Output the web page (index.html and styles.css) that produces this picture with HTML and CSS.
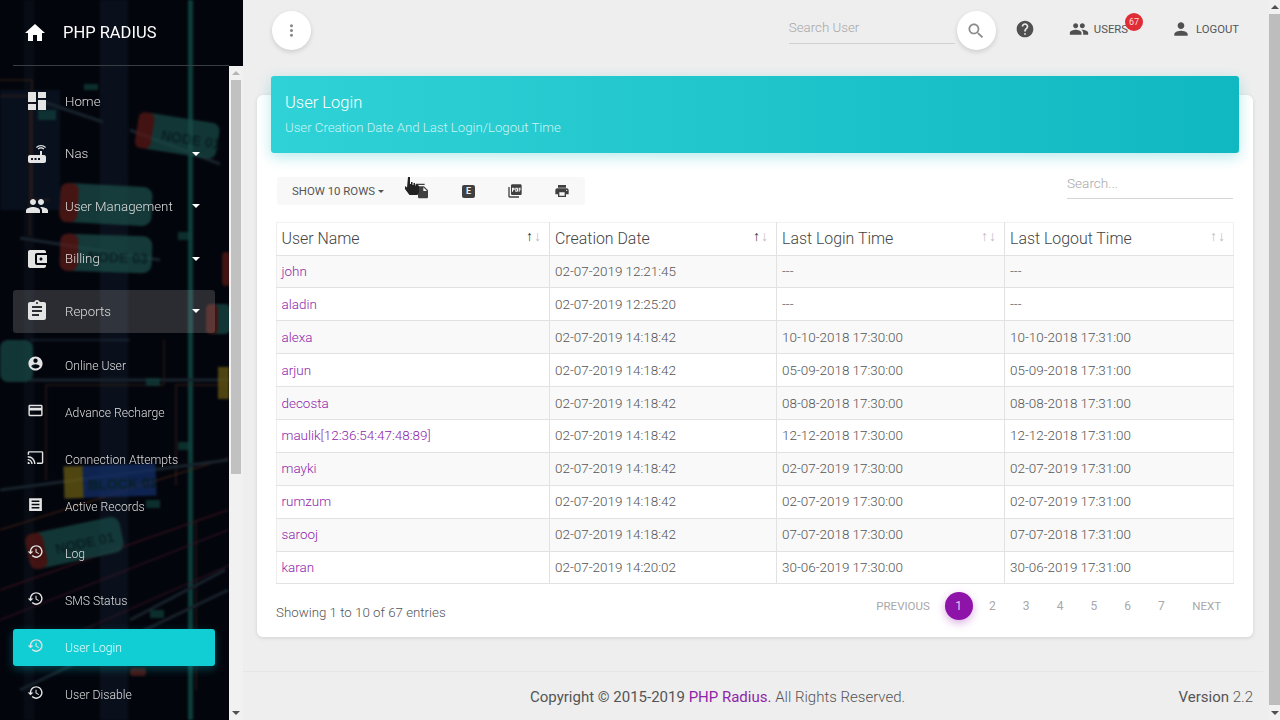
FILE: index.html
```html
<!DOCTYPE html>
<html lang="en">
<head>
    <meta charset="UTF-8">
    <meta name="viewport" content="width=device-width, initial-scale=1.0">
    <title>PHP Radius - User Login</title>
    <link rel="stylesheet" href="styles.css">
</head>
<body>
    <!-- Material icons -->
    <svg class="icon-defs" xmlns="http://www.w3.org/2000/svg">
        <symbol id="i-home" viewBox="0 0 24 24"><path d="M10 20v-6h4v6h5v-8h3L12 3 2 12h3v8z"/></symbol>
        <symbol id="i-dashboard" viewBox="0 0 24 24"><path d="M3 13h8V3H3v10zm0 8h8v-6H3v6zm10 0h8V11h-8v10zm0-18v6h8V3h-8z"/></symbol>
        <symbol id="i-router" viewBox="0 0 24 24"><path d="M20.2 5.9l.8-.8C19.6 3.7 17.8 3 16 3s-3.6.7-5 2.1l.8.8C13 4.8 14.5 4.2 16 4.2s3 .6 4.2 1.7zm-.9.8c-.9-.9-2.1-1.4-3.3-1.4s-2.4.5-3.3 1.4l.8.8c.7-.7 1.6-1 2.5-1 .9 0 1.8.3 2.5 1l.8-.8zM19 13h-2V9h-2v4H5c-1.1 0-2 .9-2 2v4c0 1.1.9 2 2 2h14c1.1 0 2-.9 2-2v-4c0-1.1-.9-2-2-2zM8 18H6v-2h2v2zm3.5 0h-2v-2h2v2zm3.5 0h-2v-2h2v2z"/></symbol>
        <symbol id="i-people" viewBox="0 0 24 24"><path d="M16 11c1.66 0 2.99-1.34 2.99-3S17.66 5 16 5c-1.66 0-3 1.34-3 3s1.34 3 3 3zm-8 0c1.66 0 2.99-1.34 2.99-3S9.66 5 8 5C6.34 5 5 6.34 5 8s1.34 3 3 3zm0 2c-2.33 0-7 1.17-7 3.5V19h14v-2.5c0-2.33-4.67-3.5-7-3.5zm8 0c-.29 0-.62.02-.97.05 1.16.84 1.97 1.97 1.97 3.45V19h6v-2.5c0-2.33-4.67-3.5-7-3.5z"/></symbol>
        <symbol id="i-wallet" viewBox="0 0 24 24"><path d="M21 18v1c0 1.1-.9 2-2 2H5c-1.11 0-2-.9-2-2V5c0-1.1.89-2 2-2h14c1.1 0 2 .9 2 2v1h-9c-1.11 0-2 .9-2 2v8c0 1.1.89 2 2 2h9zm-9-2h10V8H12v8zm4-2.5c-.83 0-1.5-.67-1.5-1.5s.67-1.5 1.5-1.5 1.5.67 1.5 1.5-.67 1.5-1.5 1.5z"/></symbol>
        <symbol id="i-assignment" viewBox="0 0 24 24"><path d="M19 3h-4.18C14.4 1.84 13.3 1 12 1c-1.3 0-2.4.84-2.82 2H5c-1.1 0-2 .9-2 2v14c0 1.1.9 2 2 2h14c1.1 0 2-.9 2-2V5c0-1.1-.9-2-2-2zm-7 0c.55 0 1 .45 1 1s-.45 1-1 1-1-.45-1-1 .45-1 1-1zm2 14H7v-2h7v2zm3-4H7v-2h10v2zm0-4H7V7h10v2z"/></symbol>
        <symbol id="i-account" viewBox="0 0 24 24"><path d="M12 2C6.48 2 2 6.48 2 12s4.48 10 10 10 10-4.48 10-10S17.52 2 12 2zm0 3c1.66 0 3 1.34 3 3s-1.34 3-3 3-3-1.34-3-3 1.34-3 3-3zm0 14.2c-2.5 0-4.71-1.28-6-3.22.03-1.99 4-3.08 6-3.08 1.99 0 5.97 1.09 6 3.08-1.29 1.94-3.5 3.22-6 3.22z"/></symbol>
        <symbol id="i-card" viewBox="0 0 24 24"><path d="M20 4H4c-1.11 0-1.99.89-1.99 2L2 18c0 1.11.89 2 2 2h16c1.11 0 2-.89 2-2V6c0-1.11-.89-2-2-2zm0 14H4v-6h16v6zm0-10H4V6h16v2z"/></symbol>
        <symbol id="i-cast" viewBox="0 0 24 24"><path d="M21 3H3c-1.1 0-2 .9-2 2v3h2V5h18v14h-7v2h7c1.1 0 2-.9 2-2V5c0-1.1-.9-2-2-2zM1 18v3h3c0-1.66-1.34-3-3-3zm0-4v2c2.76 0 5 2.24 5 5h2c0-3.87-3.13-7-7-7zm0-4v2c4.97 0 9 4.03 9 9h2c0-6.08-4.93-11-11-11z"/></symbol>
        <symbol id="i-records" viewBox="0 0 24 24"><path fill-rule="evenodd" d="M3 3h18v18H3zM6.500 6.500v2h11v-2zm0 4.500v2h11v-2zm0 4.500v2h11v-2z"/></symbol>
        <symbol id="i-history" viewBox="0 0 24 24"><path d="M13 3c-4.97 0-9 4.03-9 9H1l3.89 3.89.07.14L9 12H6c0-3.87 3.13-7 7-7s7 3.13 7 7-3.13 7-7 7c-1.93 0-3.68-.79-4.94-2.06l-1.42 1.42C8.27 19.99 10.51 21 13 21c4.97 0 9-4.03 9-9s-4.03-9-9-9zm-1 5v5l4.28 2.54.72-1.21-3.5-2.08V8H12z"/></symbol>
        <symbol id="i-search" viewBox="0 0 24 24"><path d="M15.5 14h-.79l-.28-.27C15.41 12.59 16 11.11 16 9.5 16 5.91 13.09 3 9.5 3S3 5.91 3 9.5 5.91 16 9.500 16c1.610 0 3.090-.59 4.230-1.570l.27.28v.79l5 4.990L20.490 19l-4.990-5zm-6 0C7.010 14 5 11.990 5 9.500S7.010 5 9.500 5 14 7.010 14 9.500 11.990 14 9.500 14z"/></symbol>
        <symbol id="i-help" viewBox="0 0 24 24"><path d="M12 2C6.48 2 2 6.48 2 12s4.48 10 10 10 10-4.48 10-10S17.52 2 12 2zm1 17h-2v-2h2v2zm2.07-7.75l-.9.92C13.45 12.9 13 13.5 13 15h-2v-.5c0-1.1.45-2.1 1.17-2.83l1.24-1.26c.37-.36.59-.86.59-1.41 0-1.1-.9-2-2-2s-2 .9-2 2H8c0-2.21 1.79-4 4-4s4 1.79 4 4c0 .88-.36 1.68-.93 2.25z"/></symbol>
        <symbol id="i-person" viewBox="0 0 24 24"><path d="M12 12c2.21 0 4-1.79 4-4s-1.79-4-4-4-4 1.790-4 4 1.790 4 4 4zm0 2c-2.670 0-8 1.340-8 4v2h16v-2c0-2.660-5.330-4-8-4z"/></symbol>
        <symbol id="i-more" viewBox="0 0 24 24"><path d="M12 8c1.100 0 2-.9 2-2s-.9-2-2-2-2 .9-2 2 .9 2 2 2zm0 2c-1.100 0-2 .9-2 2s.9 2 2 2 2-.9 2-2-.9-2-2-2zm0 6c-1.100 0-2 .9-2 2s.9 2 2 2 2-.9 2-2-.9-2-2-2z"/></symbol>
        <symbol id="i-copy" viewBox="0 0 24 24"><path d="M16 1H4c-1.100 0-2 .9-2 2v14h2V3h12V1zm-1 4l6 6v10c0 1.100-.9 2-2 2H7.990C6.890 23 6 22.100 6 21l.01-14c0-1.100.89-2 1.990-2h7zm-1 7h5.500L14 6.500V12z"/></symbol>
        <symbol id="i-pdf" viewBox="0 0 24 24"><path d="M20 2H8c-1.100 0-2 .9-2 2v12c0 1.100.9 2 2 2h12c1.100 0 2-.9 2-2V4c0-1.100-.9-2-2-2zm-8.500 7.500c0 .83-.67 1.500-1.500 1.500H9v2H7.500V7H10c.83 0 1.500.67 1.500 1.500v1zm5 2c0 .83-.67 1.500-1.500 1.500h-2.500V7H15c.83 0 1.500.67 1.500 1.500v3zm4-3H19v1h1.500V11H19v2h-1.500V7h3v1.500zM9 9.500h1v-1H9v1zM4 6H2v14c0 1.100.9 2 2 2h14v-2H4V6zm10 5.500h1v-3h-1v3z"/></symbol>
        <symbol id="i-print" viewBox="0 0 24 24"><path d="M19 8H5c-1.660 0-3 1.340-3 3v6h4v4h12v-4h4v-6c0-1.660-1.340-3-3-3zm-3 11H8v-5h8v5zm3-7c-.55 0-1-.45-1-1s.45-1 1-1 1 .45 1 1-.45 1-1 1zm-1-9H6v4h12V3z"/></symbol>
    </svg>

    <div class="app">
        <aside class="sidebar">
            <!-- background picture of the sidebar -->
            <svg class="side-bg" width="243" height="720" viewBox="0 0 243 720" xmlns="http://www.w3.org/2000/svg">
                <rect width="243" height="720" fill="#03050c"/>
                <rect x="0" y="90" width="60" height="120" fill="#0b1322" opacity=".8"/>
                <rect x="100" y="0" width="28" height="720" fill="#0e1420" opacity=".75"/>
                <rect x="24" y="0" width="10" height="720" fill="#0a101c" opacity=".6"/>
                <rect x="188" y="0" width="5" height="720" fill="#0c3d3b"/>
                <g fill="none" stroke-width="1">
                    <path d="M0 80h32v120h18" stroke="#3d2218"/>
                    <path d="M0 96h30v140" stroke="#3d2218"/>
                    <path d="M164 340v45h-118v95" stroke="#33201a"/>
                    <path d="M228 385h-52v100" stroke="#3a221a"/>
                    <path d="M0 530l228-72" stroke="#4a2516"/>
                    <path d="M0 590l228-80" stroke="#4a1526"/>
                    <path d="M0 620l228-90" stroke="#40142a"/>
                    <path d="M60 640l170-75" stroke="#3a1526"/>
                    <path d="M196 520v170" stroke="#33201a"/>
                    <path d="M30 340l100 0" stroke="#243444"/>
                </g>
                <g stroke="#18232c" stroke-width="3" fill="none">
                    <path d="M38 100l65 22"/>
                    <path d="M20 238l140 22"/>
                    <path d="M130 130l90 34"/>
                    <path d="M30 380h200"/>
                    <path d="M0 490l228-30"/>
                    <path d="M130 620l95-50"/>
                    <path d="M20 690l208-100"/>
                </g>
                <g opacity=".72">
                    <g transform="rotate(9 180 138)">
                        <rect x="136" y="118" width="82" height="36" rx="8" fill="#1a4b47"/>
                        <rect x="136" y="118" width="16" height="36" rx="6" fill="#5c1a16"/>
                        <text x="161" y="143" class="bg-label">NODE 01</text>
                    </g>
                    <g transform="rotate(3 106 205)">
                        <rect x="60" y="185" width="92" height="39" rx="9" fill="#1d4f4a"/>
                        <rect x="60" y="185" width="18" height="39" rx="7" fill="#601c18"/>
                    </g>
                    <g transform="rotate(2 106 254)">
                        <rect x="60" y="235" width="92" height="37" rx="9" fill="#1d4f4a"/>
                        <rect x="60" y="235" width="18" height="37" rx="7" fill="#601c18"/>
                        <text x="88" y="262" class="bg-label">NODE 03</text>
                    </g>
                    <rect x="222" y="252" width="8" height="34" rx="4" fill="#5c1a16"/>
                    <rect x="206" y="304" width="24" height="30" rx="5" fill="#1a4b47"/>
                    <rect x="206" y="304" width="12" height="30" rx="5" fill="#5c1a16"/>
                    <rect x="0" y="340" width="33" height="42" rx="8" fill="#1a4b47"/>
                    <rect x="218" y="367" width="11" height="32" fill="#6d5d14"/>
                    <g transform="rotate(-2 110 480)">
                        <rect x="64" y="465" width="92" height="32" fill="#14306a"/>
                        <rect x="64" y="465" width="19" height="32" fill="#6e5f14"/>
                        <text x="88" y="489" class="bg-label">BLOCK 01</text>
                    </g>
                    <g transform="rotate(-12 74 540)">
                        <rect x="26" y="525" width="96" height="36" rx="9" fill="#1a4b47"/>
                        <rect x="26" y="525" width="18" height="36" rx="7" fill="#5c1a16"/>
                        <text x="54" y="550" class="bg-label">NODE 01</text>
                    </g>
                    <rect x="130" y="668" width="16" height="8" rx="3" fill="#5c1a16"/>
                    <g fill="#12403d">
                        <rect x="38" y="110" width="18" height="10"/>
                        <rect x="84" y="84" width="14" height="6"/>
                        <rect x="178" y="232" width="14" height="8"/>
                        <rect x="146" y="378" width="14" height="8"/>
                        <rect x="178" y="442" width="14" height="8"/>
                        <rect x="146" y="500" width="14" height="8"/>
                        <rect x="150" y="610" width="14" height="8"/>
                    </g>
                </g>
            </svg>

            <a class="brand" href="#">
                <svg class="brand-icon"><use href="#i-home"/></svg>
                <span>PHP RADIUS</span>
            </a>

            <div class="side-body">
                <nav class="side-nav">
                    <a class="nav-item" href="#"><svg class="nav-icon"><use href="#i-dashboard"/></svg>Home</a>
                    <a class="nav-item" href="#"><svg class="nav-icon"><use href="#i-router"/></svg>Nas<i class="caret"></i></a>
                    <a class="nav-item" href="#"><svg class="nav-icon"><use href="#i-people"/></svg>User Management<i class="caret"></i></a>
                    <a class="nav-item" href="#"><svg class="nav-icon"><use href="#i-wallet"/></svg>Billing<i class="caret"></i></a>
                    <a class="nav-item open" href="#"><svg class="nav-icon"><use href="#i-assignment"/></svg>Reports<i class="caret"></i></a>

                    <div class="sub-nav">
                        <a class="sub-item" href="#"><svg class="sub-icon"><use href="#i-account"/></svg>Online User</a>
                        <a class="sub-item" href="#"><svg class="sub-icon"><use href="#i-card"/></svg>Advance Recharge</a>
                        <a class="sub-item" href="#"><svg class="sub-icon"><use href="#i-cast"/></svg>Connection Attempts</a>
                        <a class="sub-item" href="#"><svg class="sub-icon"><use href="#i-records"/></svg>Active Records</a>
                        <a class="sub-item" href="#"><svg class="sub-icon"><use href="#i-history"/></svg>Log</a>
                        <a class="sub-item" href="#"><svg class="sub-icon"><use href="#i-history"/></svg>SMS Status</a>
                        <a class="sub-item active" href="#"><svg class="sub-icon"><use href="#i-history"/></svg>User Login</a>
                        <a class="sub-item" href="#"><svg class="sub-icon"><use href="#i-history"/></svg>User Disable</a>
                    </div>
                </nav>
                <div class="side-scroll">
                    <i class="arrow-up"></i>
                    <div class="side-thumb"></div>
                    <i class="arrow-down"></i>
                </div>
            </div>
        </aside>

        <main class="main">
            <header class="topbar">
                <button class="round-btn menu-btn"><svg class="more-icon"><use href="#i-more"/></svg></button>
                <div class="top-search">Search User</div>
                <button class="round-btn search-btn"><svg class="search-icon"><use href="#i-search"/></svg></button>
                <a class="top-link help-link" href="#"><svg class="help-icon"><use href="#i-help"/></svg></a>
                <a class="top-link users-link" href="#">
                    <svg class="top-icon"><use href="#i-people"/></svg>USERS
                    <span class="badge">67</span>
                </a>
                <a class="top-link logout-link" href="#"><svg class="top-icon"><use href="#i-person"/></svg>LOGOUT</a>
            </header>

            <section class="card">
                <div class="card-header">
                    <h4>User Login</h4>
                    <p>User Creation Date And Last Login/Logout Time</p>
                </div>

                <div class="table-tools">
                    <div class="dt-buttons">
                        <span class="rows-btn">SHOW 10 ROWS<i class="rows-caret"></i></span>
                        <svg class="tool-icon copy-icon"><use href="#i-copy"/></svg>
                        <span class="excel-icon">E</span>
                        <svg class="tool-icon pdf-icon"><use href="#i-pdf"/></svg>
                        <svg class="tool-icon print-icon"><use href="#i-print"/></svg>
                    </div>
                    <div class="table-search">Search...</div>
                </div>

                <table class="data-table">
                    <thead>
                        <tr>
                            <th class="col-name">User Name<span class="sort"><b>↑</b>↓</span></th>
                            <th class="col-created">Creation Date<span class="sort"><b>↑</b>↓</span></th>
                            <th class="col-login">Last Login Time<span class="sort">↑↓</span></th>
                            <th>Last Logout Time<span class="sort">↑↓</span></th>
                        </tr>
                    </thead>
                    <tbody>
                        <tr><td><a href="#">john</a></td><td>02-07-2019 12:21:45</td><td>---</td><td>---</td></tr>
                        <tr><td><a href="#">aladin</a></td><td>02-07-2019 12:25:20</td><td>---</td><td>---</td></tr>
                        <tr><td><a href="#">alexa</a></td><td>02-07-2019 14:18:42</td><td>10-10-2018 17:30:00</td><td>10-10-2018 17:31:00</td></tr>
                        <tr><td><a href="#">arjun</a></td><td>02-07-2019 14:18:42</td><td>05-09-2018 17:30:00</td><td>05-09-2018 17:31:00</td></tr>
                        <tr><td><a href="#">decosta</a></td><td>02-07-2019 14:18:42</td><td>08-08-2018 17:30:00</td><td>08-08-2018 17:31:00</td></tr>
                        <tr><td><a href="#">maulik[12:36:54:47:48:89]</a></td><td>02-07-2019 14:18:42</td><td>12-12-2018 17:30:00</td><td>12-12-2018 17:31:00</td></tr>
                        <tr><td><a href="#">mayki</a></td><td>02-07-2019 14:18:42</td><td>02-07-2019 17:30:00</td><td>02-07-2019 17:31:00</td></tr>
                        <tr><td><a href="#">rumzum</a></td><td>02-07-2019 14:18:42</td><td>02-07-2019 17:30:00</td><td>02-07-2019 17:31:00</td></tr>
                        <tr><td><a href="#">sarooj</a></td><td>02-07-2019 14:18:42</td><td>07-07-2018 17:30:00</td><td>07-07-2018 17:31:00</td></tr>
                        <tr><td><a href="#">karan</a></td><td>02-07-2019 14:20:02</td><td>30-06-2019 17:30:00</td><td>30-06-2019 17:31:00</td></tr>
                    </tbody>
                </table>

                <div class="table-foot">
                    <div class="table-info">Showing 1 to 10 of 67 entries</div>
                    <div class="pager">
                        <a class="pager-text prev" href="#">PREVIOUS</a>
                        <a class="page-num current" href="#">1</a>
                        <a class="page-num" href="#">2</a>
                        <a class="page-num" href="#">3</a>
                        <a class="page-num" href="#">4</a>
                        <a class="page-num" href="#">5</a>
                        <a class="page-num" href="#">6</a>
                        <a class="page-num" href="#">7</a>
                        <a class="pager-text next" href="#">NEXT</a>
                    </div>
                </div>
            </section>

            <footer class="footer">
                <div class="copyright">Copyright © 2015-2019 <a href="#">PHP Radius.</a> <span>All Rights Reserved.</span></div>
                <div class="version">Version <span>2.2</span></div>
            </footer>
        </main>

        <div class="page-scroll">
            <i class="arrow-up"></i>
            <div class="page-thumb"></div>
            <i class="arrow-down"></i>
        </div>
    </div>

    <!-- mouse pointer caught in the screenshot -->
    <svg class="hand-cursor" width="14" height="20" viewBox="0 0 14 20" xmlns="http://www.w3.org/2000/svg">
        <path d="M3 0h2v7h1V5h1.500v3h1V6H10v3h1V7.500h1.500L14 9v6l-1.500 3h-8L0 12V9l2 1.500z" fill="#222"/>
    </svg>
</body>
</html>
```

FILE: styles.css
```css
/* Basic Styling */
* {
    box-sizing: border-box;
}

body {
    margin: 0;
    height: 720px;
    overflow: hidden;
    background: #eeeeee;
    color: #555;
    font-family: Roboto, "Liberation Sans", sans-serif;
    font-weight: 300;
}

a {
    text-decoration: none;
    color: inherit;
}

.icon-defs {
    display: none;
}

.app {
    display: flex;
    height: 720px;
}

/* Sidebar */
.sidebar {
    position: relative;
    flex: 0 0 243px;
    height: 720px;
    display: flex;
    flex-direction: column;
    overflow: hidden;
    background: #03050c;
    color: #e4e4e4;
}

.side-bg {
    position: absolute;
    top: 0;
    left: 0;
    filter: blur(0.8px);
}

.bg-label {
    font-family: "Liberation Sans", sans-serif;
    font-size: 14px;
    font-weight: 700;
    fill: #0d2a2c;
}

.brand {
    position: relative;
    flex: 0 0 66px;
    display: flex;
    align-items: center;
    margin: 0 14px 0 13px;
    padding-bottom: 1px;
    border-bottom: 1px solid #3a3d44;
    color: #fff;
    font-size: 16.5px;
    font-weight: 400;
}

.brand-icon {
    width: 24px;
    height: 24px;
    margin: 2px 16px 0 10px;
    fill: #fff;
}

.side-body {
    position: relative;
    flex: 1;
    display: flex;
    min-height: 0;
}

.side-nav {
    flex: 1;
    padding: 13.5px 14px 0 13px;
    display: flex;
    flex-direction: column;
    gap: 9.5px;
    overflow: hidden;
}

.nav-item {
    flex: 0 0 43px;
    display: flex;
    align-items: center;
    padding: 0 15px 0 11.5px;
    border-radius: 3px;
    font-size: 13.3px;
    color: #dedede;
}

.nav-item.open {
    background: rgba(200, 200, 200, 0.2);
}

.nav-icon {
    flex: none;
    width: 24px;
    height: 24px;
    margin-right: 16.5px;
    fill: #e4e4e4;
}

.caret {
    margin-left: auto;
    width: 0;
    height: 0;
    border-left: 4px solid transparent;
    border-right: 4px solid transparent;
    border-top: 4px solid #fff;
}

.sub-nav {
    margin-top: 5px;
    display: flex;
    flex-direction: column;
    gap: 10px;
}

.sub-item {
    flex: 0 0 37px;
    display: flex;
    align-items: center;
    padding-left: 14px;
    border-radius: 3px;
    font-size: 12.2px;
    color: #dedede;
}

.sub-item.active {
    background: #10ced4;
    color: #e6fbfb;
    box-shadow: 0 3px 10px rgba(16, 206, 212, 0.3);
}

.sub-icon {
    flex: none;
    width: 17px;
    height: 17px;
    margin: -5px 21px 0 0;
    fill: #e4e4e4;
}

.side-scroll {
    flex: 0 0 14px;
    display: flex;
    flex-direction: column;
    align-items: center;
    background: #f1f1f1;
}

.side-thumb {
    width: 10px;
    height: 394px;
    background: #c1c1c1;
}

.side-scroll .arrow-down {
    margin-top: auto;
    margin-bottom: 5px;
}

.side-scroll .arrow-up {
    margin: 5px 0 5px;
}

.arrow-up,
.arrow-down {
    flex: none;
    width: 0;
    height: 0;
    border-left: 4px solid transparent;
    border-right: 4px solid transparent;
}

.arrow-up {
    border-bottom: 4px solid #b5b5b5;
}

.arrow-down {
    border-top: 4px solid #505050;
}

/* Page scrollbar */
.page-scroll {
    flex: 0 0 11px;
    display: flex;
    flex-direction: column;
    align-items: center;
    background: #f1f1f1;
}

.page-scroll .arrow-up {
    margin: 5px 0 5px;
    border-bottom-color: #505050;
}

.page-scroll .arrow-down {
    margin-top: 6px;
}

.page-thumb {
    width: 11px;
    height: 691px;
    background: #bdbdbd;
}

/* Top bar */
.main {
    flex: 1;
    min-width: 0;
    display: flex;
    flex-direction: column;
}

.topbar {
    flex: 0 0 95px;
    display: flex;
    align-items: flex-start;
    padding: 11px 30px 0 29px;
}

.round-btn {
    flex: none;
    width: 39px;
    height: 39px;
    padding: 0;
    border: none;
    border-radius: 50%;
    background: #fff;
    box-shadow: 0 2px 5px rgba(0, 0, 0, 0.14);
    display: flex;
    align-items: center;
    justify-content: center;
}

.more-icon {
    width: 19px;
    height: 19px;
    fill: #8a8a8a;
}

.search-icon {
    width: 20px;
    height: 20px;
    fill: #8a8a8a;
}

.top-search {
    width: 166px;
    height: 33px;
    margin: 0 2px 0 auto;
    padding-top: 9px;
    border-bottom: 1px solid #d0d0d0;
    font-size: 13.3px;
    color: #a8a8a8;
}

.top-link {
    position: relative;
    display: flex;
    align-items: center;
    height: 36px;
    font-size: 11.3px;
    font-weight: 400;
    color: #555;
}

.help-link {
    margin-left: 19px;
}

.help-icon {
    width: 20px;
    height: 20px;
    fill: #505050;
}

.users-link {
    margin-left: 34px;
}

.logout-link {
    margin-left: 43px;
}

.top-icon {
    width: 20px;
    height: 20px;
    margin-right: 5px;
    fill: #505050;
}

.badge {
    position: absolute;
    top: 2px;
    right: -15px;
    width: 18px;
    height: 18px;
    border-radius: 50%;
    background: #e02c36;
    color: #fdd;
    font-size: 9px;
    line-height: 18px;
    text-align: center;
}

/* Card */
.card {
    position: relative;
    margin: 0 16px 0 14px;
    height: 542px;
    padding: 0 20px 0 19px;
    background: #fff;
    border-radius: 6px;
    box-shadow: 0 1px 4px rgba(0, 0, 0, 0.12);
}

.card-header {
    height: 77px;
    margin: -19px -6px 0 -5px;
    padding: 17px 14px 0;
    border-radius: 3px;
    background: linear-gradient(90deg, #2fd2d6, #10b8c1);
    box-shadow: 0 4px 14px rgba(16, 184, 193, 0.3);
    color: #fff;
}

.card-header h4 {
    margin: 0;
    font-size: 16.5px;
    font-weight: 300;
    line-height: 20px;
}

.card-header p {
    margin: 7px 0 0;
    font-size: 13.2px;
    line-height: 16px;
    color: #c9f3f4;
}

.table-tools {
    display: flex;
    justify-content: space-between;
    margin-top: 24px;
    height: 45px;
}

.dt-buttons {
    width: 308px;
    height: 28px;
    margin-left: 1px;
    display: flex;
    align-items: center;
    position: relative;
    background: #f8f8f8;
    border-radius: 3px;
}

.rows-btn {
    margin-left: 15px;
    font-size: 11.4px;
    font-weight: 400;
    color: #555;
}

.rows-caret {
    display: inline-block;
    margin-left: 3px;
    vertical-align: 2px;
    border-left: 3px solid transparent;
    border-right: 3px solid transparent;
    border-top: 3px solid #555;
}

.tool-icon {
    width: 16px;
    height: 16px;
    fill: #404040;
}

.copy-icon {
    margin-left: 30px;
}

.excel-icon {
    width: 13px;
    height: 13px;
    margin-left: 32px;
    border-radius: 2px;
    background: #404040;
    color: #eee;
    font-size: 9px;
    font-weight: 700;
    line-height: 13px;
    text-align: center;
}

.pdf-icon {
    margin-left: 32px;
}

.print-icon {
    margin-left: 31px;
}

.table-search {
    width: 166px;
    height: 23px;
    margin-top: -1px;
    border-bottom: 1px solid #d5d5d5;
    font-size: 13.6px;
    line-height: 15px;
    color: #a8a8a8;
}

/* Table */
.data-table {
    width: 958px;
    table-layout: fixed;
    border-collapse: collapse;
}

.data-table th,
.data-table td {
    padding: 0 5px;
    border: 1px solid #e2e2e2;
    text-align: left;
}

.data-table th {
    height: 32.5px;
    border-top-color: #f2f2f2;
    font-size: 15.9px;
    font-weight: 300;
    color: #444;
    position: relative;
}

.data-table td {
    height: 32.9px;
    font-size: 13.45px;
    color: #555;
}

.data-table th:first-child,
.data-table td:first-child {
    padding-left: 4.5px;
    border-left-color: #eeeeee;
}

.data-table th:last-child,
.data-table td:last-child {
    border-right-color: #eeeeee;
}

.data-table td a {
    color: #8e24aa;
}

.data-table tbody tr:nth-child(odd) {
    background: #f9f9f9;
}

.col-name {
    width: 273px;
}

.col-created {
    width: 227px;
}

.col-login {
    width: 228px;
}

.sort {
    position: absolute;
    top: 5px;
    right: 7px;
    font-size: 14px;
    letter-spacing: 1px;
    color: #bdbdbd;
}

.sort b {
    color: #333;
    font-weight: 400;
}

.table-foot {
    display: flex;
    justify-content: space-between;
    margin-top: 7.5px;
}

.table-info {
    margin-top: 13px;
    font-size: 13.3px;
    line-height: 16px;
    color: #555;
}

.pager {
    display: flex;
    align-items: center;
    gap: 5.8px;
    height: 28px;
}

.pager-text {
    font-size: 11.5px;
    font-weight: 400;
    color: #a8a8a8;
}

.prev {
    margin-right: 9px;
}

.next {
    margin-left: 11px;
    padding-right: 12px;
}

.page-num {
    width: 28px;
    height: 28px;
    border-radius: 50%;
    font-size: 12px;
    font-weight: 400;
    line-height: 28px;
    text-align: center;
    color: #a8a8a8;
}

.page-num.current {
    background: #8e13a8;
    color: #e8c9ef;
    box-shadow: 0 3px 8px rgba(142, 19, 168, 0.35);
}

/* Footer */
.footer {
    margin: 34px 6px 0 0;
    height: 49px;
    display: flex;
    justify-content: space-between;
    align-items: center;
    padding: 2px 10px 0 287px;
    border-top: 1px solid #e6e6e6;
    font-size: 15px;
    color: #555;
    font-weight: 400;
}

.copyright a {
    color: #8e24aa;
}

.copyright span,
.version span {
    font-weight: 300;
}

/* Mouse pointer */
.hand-cursor {
    position: absolute;
    top: 177px;
    left: 405px;
}
```
